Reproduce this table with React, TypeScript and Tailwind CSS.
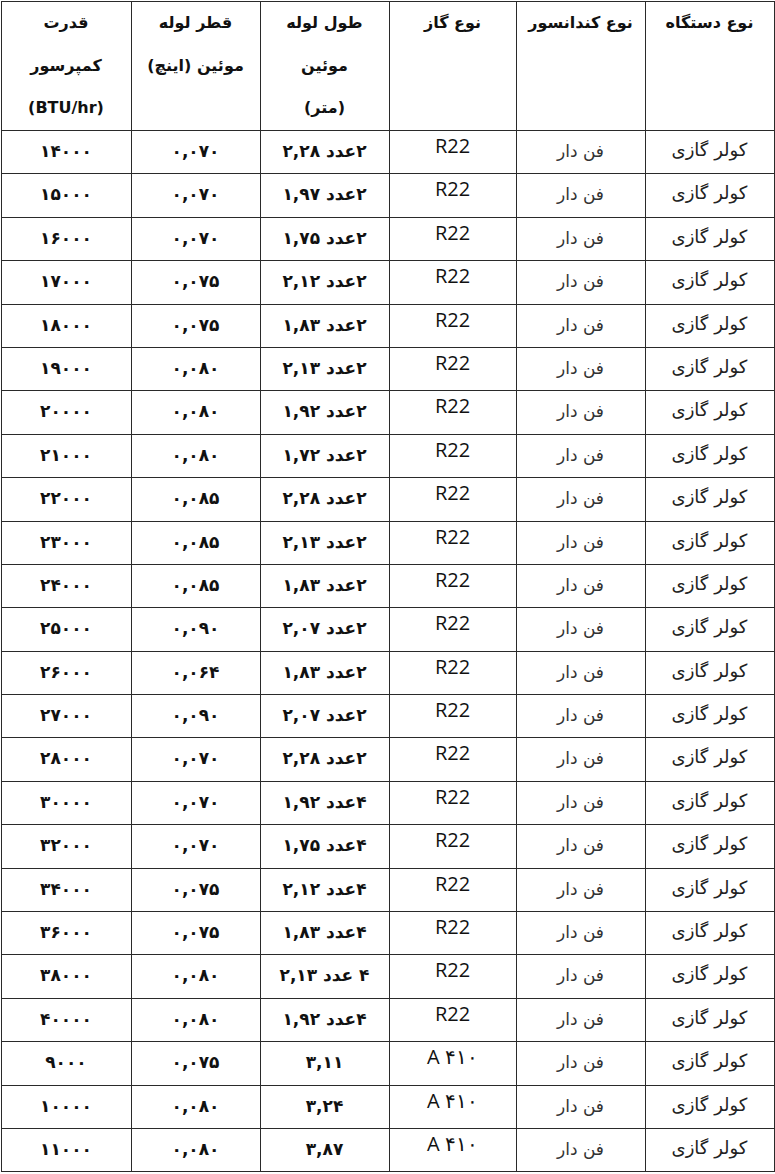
const fa = "font-['DejaVu_Sans',sans-serif]";

type Row = {
  power: string;
  diameter: string;
  length: string;
  gas: string;
};

const rows: Row[] = [
  { power: '۱۴۰۰۰', diameter: '۰,۰۷۰', length: '۲عدد ۲,۲۸', gas: 'R22' },
  { power: '۱۵۰۰۰', diameter: '۰,۰۷۰', length: '۲عدد ۱,۹۷', gas: 'R22' },
  { power: '۱۶۰۰۰', diameter: '۰,۰۷۰', length: '۲عدد ۱,۷۵', gas: 'R22' },
  { power: '۱۷۰۰۰', diameter: '۰,۰۷۵', length: '۲عدد ۲,۱۲', gas: 'R22' },
  { power: '۱۸۰۰۰', diameter: '۰,۰۷۵', length: '۲عدد ۱,۸۳', gas: 'R22' },
  { power: '۱۹۰۰۰', diameter: '۰,۰۸۰', length: '۲عدد ۲,۱۳', gas: 'R22' },
  { power: '۲۰۰۰۰', diameter: '۰,۰۸۰', length: '۲عدد ۱,۹۲', gas: 'R22' },
  { power: '۲۱۰۰۰', diameter: '۰,۰۸۰', length: '۲عدد ۱,۷۲', gas: 'R22' },
  { power: '۲۲۰۰۰', diameter: '۰,۰۸۵', length: '۲عدد ۲,۲۸', gas: 'R22' },
  { power: '۲۳۰۰۰', diameter: '۰,۰۸۵', length: '۲عدد ۲,۱۳', gas: 'R22' },
  { power: '۲۴۰۰۰', diameter: '۰,۰۸۵', length: '۲عدد ۱,۸۳', gas: 'R22' },
  { power: '۲۵۰۰۰', diameter: '۰,۰۹۰', length: '۲عدد ۲,۰۷', gas: 'R22' },
  { power: '۲۶۰۰۰', diameter: '۰,۰۶۴', length: '۲عدد ۱,۸۳', gas: 'R22' },
  { power: '۲۷۰۰۰', diameter: '۰,۰۹۰', length: '۲عدد ۲,۰۷', gas: 'R22' },
  { power: '۲۸۰۰۰', diameter: '۰,۰۷۰', length: '۲عدد ۲,۲۸', gas: 'R22' },
  { power: '۳۰۰۰۰', diameter: '۰,۰۷۰', length: '۴عدد ۱,۹۲', gas: 'R22' },
  { power: '۳۲۰۰۰', diameter: '۰,۰۷۰', length: '۴عدد ۱,۷۵', gas: 'R22' },
  { power: '۳۴۰۰۰', diameter: '۰,۰۷۵', length: '۴عدد ۲,۱۲', gas: 'R22' },
  { power: '۳۶۰۰۰', diameter: '۰,۰۷۵', length: '۴عدد ۱,۸۳', gas: 'R22' },
  { power: '۳۸۰۰۰', diameter: '۰,۰۸۰', length: '۴ عدد ۲,۱۳', gas: 'R22' },
  { power: '۴۰۰۰۰', diameter: '۰,۰۸۰', length: '۴عدد ۱,۹۲', gas: 'R22' },
  { power: '۹۰۰۰', diameter: '۰,۰۷۵', length: '۳,۱۱', gas: 'A ۴۱۰' },
  { power: '۱۰۰۰۰', diameter: '۰,۰۸۰', length: '۳,۲۴', gas: 'A ۴۱۰' },
  { power: '۱۱۰۰۰', diameter: '۰,۰۸۰', length: '۳,۸۷', gas: 'A ۴۱۰' },
];

const cell = 'border border-[#2a2a2a] p-0 text-center align-top';

function HeaderCell({ lines }: { lines: string[] }) {
  return (
    <th className={`${cell} text-[16px] font-bold leading-[42.5px]`}>
      {lines.map((l) => (
        <div key={l}>{l}</div>
      ))}
    </th>
  );
}

export default function App() {
  return (
    <div className="min-h-[1174px] bg-white pt-px text-[#111]">
      <table dir="rtl" className={`mx-auto w-[773px] table-fixed border-collapse ${fa}`}>
        <colgroup>
          <col className="w-[129px]" />
          <col className="w-[129px]" />
          <col className="w-[127px]" />
          <col className="w-[129px]" />
          <col className="w-[129px]" />
          <col className="w-[130px]" />
        </colgroup>
        <thead>
          <tr className="h-[129px]">
            <HeaderCell lines={['نوع دستگاه']} />
            <HeaderCell lines={['نوع کندانسور']} />
            <HeaderCell lines={['نوع گاز']} />
            <HeaderCell lines={['طول لوله', 'موئین', '(متر)']} />
            <HeaderCell lines={['قطر لوله', 'موئین (اینچ)']} />
            <HeaderCell lines={['قدرت', 'کمپرسور', '(BTU/hr)']} />
          </tr>
        </thead>
        <tbody>
          {rows.map((r, i) => (
            <tr key={i} className="h-[43.4px]">
              <td className={`${cell} text-[18px] leading-[38px] text-[#222]`}>کولر گازی</td>
              <td className={`${cell} text-[17px] leading-[40px] text-[#333]`}>فن دار</td>
              <td className={`${cell} font-['Open_Sans',sans-serif] text-[20px] leading-[30px] text-[#111]`}>
                {r.gas}
              </td>
              <td className={`${cell} text-[17px] font-bold leading-[41px]`}>{r.length}</td>
              <td className={`${cell} text-[17px] font-bold leading-[41px]`}>{r.diameter}</td>
              <td className={`${cell} text-[17px] font-bold leading-[41px]`}>{r.power}</td>
            </tr>
          ))}
        </tbody>
      </table>
    </div>
  );
}
